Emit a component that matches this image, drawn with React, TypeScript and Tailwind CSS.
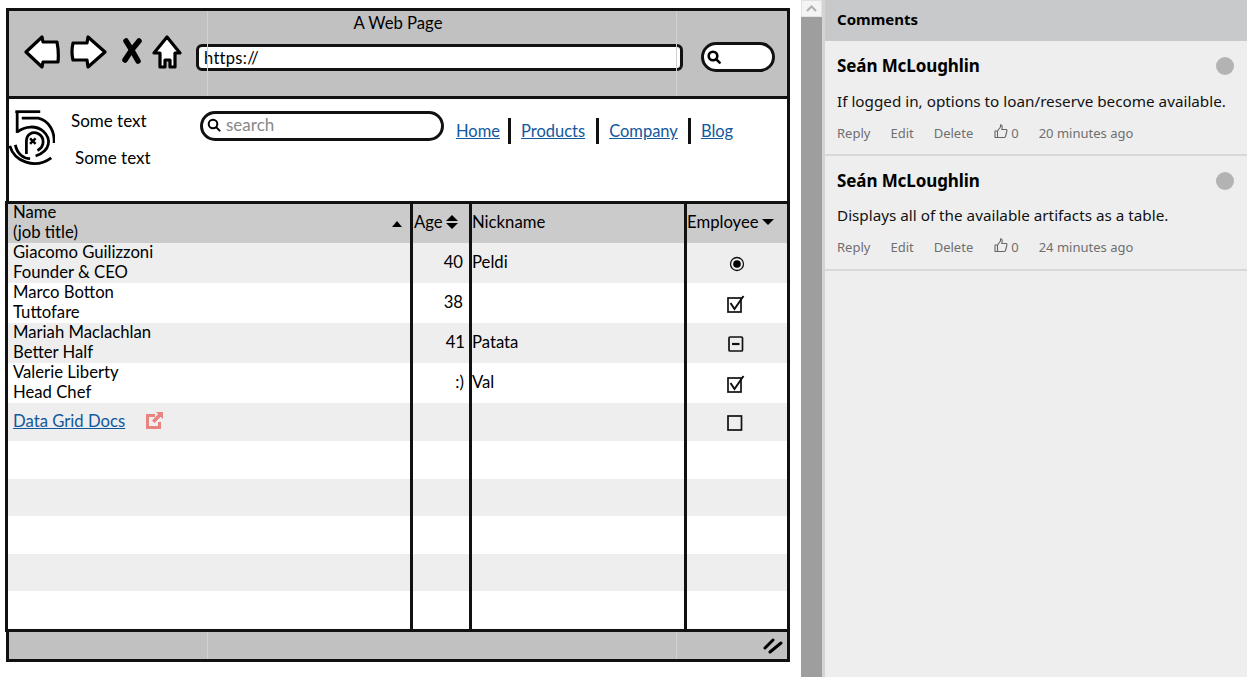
import React from "react";

const sk = "font-['Lato','Liberation_Sans',sans-serif]";

function Back() {
  return (
    <svg width="36" height="34" viewBox="0 0 36 34" fill="#fff" stroke="#000" strokeWidth="3.2" strokeLinejoin="round" strokeLinecap="round">
      <path d="M2 17 L18 2 L19 7 L33 7 Q35 17 34 27 L19 27 L18 32 Z" />
    </svg>
  );
}
function Forward() {
  return (
    <svg width="37" height="34" viewBox="0 0 37 34" fill="#fff" stroke="#000" strokeWidth="3.2" strokeLinejoin="round" strokeLinecap="round">
      <path d="M35 17 L18 2 L17 8 L3 8 Q1 17 3 25 L17 25 L18 32 Z" />
    </svg>
  );
}
function Cross() {
  return (
    <svg width="20" height="26" viewBox="0 0 20 26" fill="none" stroke="#000" strokeWidth="5.5" strokeLinecap="round">
      <path d="M4 3 Q10 12 16 23" />
      <path d="M17 3 Q9 12 3 22" />
    </svg>
  );
}
function Home() {
  return (
    <svg width="30" height="35" viewBox="0 0 30 35" fill="#fff" stroke="#000" strokeWidth="3.2" strokeLinejoin="round" strokeLinecap="round">
      <path d="M15 2 L28 18 L23 18 L23 32 L18 32 L18 25 L13 25 L13 32 L8 32 L8 18 L2 18 Z" />
    </svg>
  );
}
function Logo() {
  return (
    <svg width="48" height="59" viewBox="0 0 52 64" fill="none" stroke="#000" strokeWidth="3" className="shrink-0">
      <path d="M9 4 L36 4" />
      <path d="M11 4 L11 27" />
      <path d="M16 11 L34 11 C46 14 52 26 51 38" />
      <path d="M11 26 C20 19 32 19 39 25 C48 33 48 46 31 52" />
      <path d="M3 41 C8 58 30 67 48 54" />
      <path d="M9 40 C11 50 18 55 25 55" />
      <path d="M21 50 L21 36 C21 28 28 25 34 28 C41 32 41 42 33 46" />
      <path d="M25 33 L31 39 M31 33 L25 39" strokeWidth="2.6" />
    </svg>
  );
}
function Mag({ size = 14, w = 2 }: { size?: number; w?: number }) {
  return (
    <svg width={size} height={size} viewBox="0 0 14 14" fill="none" stroke="#000" strokeWidth={w} strokeLinecap="round" className="shrink-0">
      <circle cx="6" cy="6" r="4.3" />
      <path d="M9.4 9.4 L12.6 12.6" />
    </svg>
  );
}
function Check() {
  return (
    <svg width="20" height="20" viewBox="0 0 20 20" fill="none" stroke="#111" className="mx-auto">
      <rect x="2" y="4" width="13" height="14" strokeWidth="1.7" />
      <path d="M4.5 9 L8.5 15 L17.5 2" strokeWidth="2" />
    </svg>
  );
}
function Minus() {
  return (
    <svg width="20" height="20" viewBox="0 0 20 20" fill="none" stroke="#111" className="mx-auto">
      <rect x="3" y="3" width="13.5" height="14" rx="1" strokeWidth="1.7" />
      <path d="M6 10 L13.5 10" strokeWidth="2.2" />
    </svg>
  );
}
function Empty() {
  return (
    <svg width="20" height="20" viewBox="0 0 20 20" fill="none" stroke="#111" className="mx-auto">
      <rect x="3" y="3" width="13.5" height="14" strokeWidth="1.7" />
    </svg>
  );
}
function Radio() {
  return (
    <svg width="20" height="20" viewBox="0 0 20 20" fill="none" className="mx-auto">
      <circle cx="11" cy="10" r="6.5" stroke="#111" strokeWidth="1.3" />
      <circle cx="11" cy="10" r="3.8" fill="#000" />
    </svg>
  );
}
function Thumb() {
  return (
    <svg width="14" height="15" viewBox="0 0 14 15" fill="none" stroke="#666" strokeWidth="1.1" strokeLinejoin="round" className="shrink-0">
      <path d="M1 7 H3.5 V13.5 H1 Z" />
      <path d="M3.5 7 L6.5 3 V0.8 Q8.3 1 8.2 3 L7.8 5.5 H12.5 Q13.3 6 12.8 7.5 L11.5 12.5 Q11 13.5 10 13.5 H3.5" />
    </svg>
  );
}
function External() {
  return (
    <svg width="17" height="17" viewBox="0 0 17 17" className="shrink-0">
      <path d="M0 2 H9 V5 H3 V14 H12 V10 H15 V17 H0 Z" fill="#e8837f" />
      <path d="M10 0 H17 V7 L14.7 4.8 L8.5 11 L6 8.5 L12.2 2.3 Z" fill="#e8837f" />
    </svg>
  );
}

const rows: { name: string; title: string; age: string; nick: string; icon: React.ReactNode; ageExtra: string; bg: string }[] = [
  { name: "Giacomo Guilizzoni", title: "Founder & CEO", age: "40", nick: "Peldi", icon: <Radio />, ageExtra: "pr-[6px]", bg: "bg-[#eeeeee]" },
  { name: "Marco Botton", title: "Tuttofare", age: "38", nick: "", icon: <Check />, ageExtra: "pr-[6px]", bg: "bg-white" },
  { name: "Mariah Maclachlan", title: "Better Half", age: "41", nick: "Patata", icon: <Minus />, ageExtra: "pr-[4px]", bg: "bg-[#eeeeee]" },
  { name: "Valerie Liberty", title: "Head Chef", age: ":)", nick: "Val", icon: <Check />, ageExtra: "pr-[5px]", bg: "bg-white" },
];

const cols = "grid grid-cols-[402px_59px_215px_1fr]";
const vline = "border-l-[3px] border-[#111]";

function Comment({ time, text, shift }: { time: string; text: string; shift: string }) {
  return (
    <div className="h-[115px] border-b-2 border-[#d8d8d8] pl-3 pr-[13px] pt-[12px] box-border">
      <div className="flex items-center justify-between h-[25px]">
        <span className="text-[17px] font-bold text-black tracking-[-0.1px]">Seán McLoughlin</span>
        <span className="w-[18px] h-[18px] rounded-full bg-[#b3b3b3]" />
      </div>
      <p className={`text-[15.25px] leading-5 text-[#111] whitespace-nowrap ${shift}`}>{text}</p>
      <div className="flex items-center text-[13px] leading-5 text-[#6f6f6f] mt-[12px]">
        <span>Reply</span>
        <span className="ml-[20px]">Edit</span>
        <span className="ml-[20px]">Delete</span>
        <span className="ml-[21px] -mt-1"><Thumb /></span>
        <span className="ml-[3px]">0</span>
        <span className="ml-[20px]">{time}</span>
      </div>
    </div>
  );
}

export default function App() {
  return (
    <div className="flex h-[677px] w-[1247px] overflow-hidden bg-white">
      <div className={`w-[801px] shrink-0 pt-[8px] pl-[6px] pr-[11px] text-black ${sk}`}>
        <div className="relative h-[91px] border-[3px] border-[#111] bg-[#c1c1c1]">
          <span className="absolute left-[198px] top-0 bottom-0 w-px bg-[#d2d2d2]" />
          <span className="absolute left-[667px] top-0 bottom-0 w-px bg-[#d2d2d2]" />
          <div className="text-center text-[16.7px] leading-5 pt-[2px]">A Web Page</div>
          <div className="flex items-start pl-[15px] mt-[2px]">
            <Back />
            <span className="ml-[10px]"><Forward /></span>
            <span className="ml-[15px] mt-[3px]"><Cross /></span>
            <span className="ml-[10px]"><Home /></span>
            <div className="ml-[14px] w-[487px] h-[27px] mt-[9px] border-[3px] border-[#111] bg-white rounded-[6px] text-[16.5px] tracking-[0.3px] leading-5 px-[5px] flex items-center">https://</div>
            <div className="ml-[18px] w-[74px] h-[30px] mt-[7px] border-[3px] border-[#111] bg-white rounded-[15px] flex items-center pl-[3px]">
              <Mag size={14} w={2.6} />
            </div>
          </div>
        </div>
        <div className="h-[102px] border-x-[3px] border-[#111] bg-white flex items-start">
          <div className="pt-[9px] -ml-[2px]"><Logo /></div>
          <div className="ml-[16px] pt-[12px] text-[17px] leading-5 w-[129px] shrink-0">
            <div>Some text</div>
            <div className="mt-[17px] ml-[4px]">Some text</div>
          </div>
          <div className="mt-[12px] w-[244px] h-[30px] shrink-0 border-[3px] border-[#111] rounded-[15px] flex items-center pl-[4px] pb-[3px] text-[17px] text-[#888]">
            <Mag size={14} w={2} />
            <span className="ml-[5px]">search</span>
          </div>
          <div className="ml-[12px] mt-[19px] flex items-center text-[16.5px] text-[#11589d] underline">
            <span>Home</span>
            <span className="ml-[8px] mr-[10px] w-[3px] h-[26px] bg-[#111]" />
            <span>Products</span>
            <span className="ml-[11px] mr-[10px] w-[3px] h-[26px] bg-[#111]" />
            <span>Company</span>
            <span className="ml-[10px] mr-[10px] w-[3px] h-[26px] bg-[#111]" />
            <span>Blog</span>
          </div>
        </div>
        <div className="h-[431px] -ml-px border-[3px] border-[#111] text-[16.7px] leading-5 overflow-hidden box-border">
          <div className={`${cols} h-[39px] bg-[#cbcbcb]`}>
            <div className="relative pl-[5px]">
              <div className="-mt-[2px]">Name</div>
              <div>(job title)</div>
              <span className="absolute right-[8px] top-[17px] w-0 h-0 border-x-[5px] border-x-transparent border-b-[6px] border-b-black" />
            </div>
            <div className={`${vline} flex items-center pl-[1px] pb-[3px]`}>
              Age
              <span className="ml-[3px] flex flex-col gap-[2px]">
                <span className="w-0 h-0 border-x-[6px] border-x-transparent border-b-[6px] border-b-black" />
                <span className="w-0 h-0 border-x-[6px] border-x-transparent border-t-[6px] border-t-black" />
              </span>
            </div>
            <div className={`${vline} flex items-center pb-[3px]`}>Nickname</div>
            <div className={`${vline} flex items-center pb-[3px] whitespace-nowrap`}>
              Employee
              <span className="ml-[3px] w-0 h-0 border-x-[6px] border-x-transparent border-t-[6px] border-t-black" />
            </div>
          </div>
          {rows.map((r) => (
            <div key={r.name} className={`${cols} h-[40px] ${r.bg}`}>
              <div className="pl-[5px]">
                <div className="-mt-px">{r.name}</div>
                <div>{r.title}</div>
              </div>
              <div className={`${vline} text-right pt-[9px] ${r.ageExtra}`}>{r.age}</div>
              <div className={`${vline} pt-[9px]`}>{r.nick}</div>
              <div className={`${vline} flex items-center pt-[2px] pr-[3px]`}>{r.icon}</div>
            </div>
          ))}
          <div className={`${cols} h-[38px] bg-[#eeeeee]`}>
            <div className="pl-[5px] flex items-center pb-[2px]">
              <span className="text-[#11589d] underline">Data Grid Docs</span>
              <span className="ml-[21px] -mt-[1px]"><External /></span>
            </div>
            <div className={vline} />
            <div className={vline} />
            <div className={`${vline} flex items-center pt-[2px] pr-[5px]`}><Empty /></div>
          </div>
          {["bg-white", "bg-[#eeeeee]", "bg-white", "bg-[#eeeeee]", "bg-white"].map((bg, i) => (
            <div key={i} className={`${cols} h-[37.5px] ${bg}`}>
              <div />
              <div className={vline} />
              <div className={vline} />
              <div className={vline} />
            </div>
          ))}
        </div>
        <div className="relative h-[30px] border-x-[3px] border-b-[3px] border-[#111] bg-[#c1c1c1] flex items-center justify-end pr-[4px]">
          <span className="absolute left-[198px] top-0 bottom-0 w-px bg-[#d2d2d2]" />
          <span className="absolute left-[667px] top-0 bottom-0 w-px bg-[#d2d2d2]" />
          <svg width="20" height="16" viewBox="0 0 20 16" fill="none" stroke="#000" strokeWidth="3" strokeLinecap="round">
            <path d="M2 10 L10 2" />
            <path d="M7 14 L18 5" />
          </svg>
        </div>
      </div>
      <div className="w-[21px] shrink-0 bg-[#9e9e9e]">
        <div className="h-[17px] bg-[#f4f4f4] border border-[#e2e2e2] flex items-center justify-center">
          <svg width="11" height="7" viewBox="0 0 11 7" fill="none" stroke="#b0b0b0" strokeWidth="2"><path d="M1 6 L5.5 1.5 L10 6" /></svg>
        </div>
      </div>
      <div className="flex-1 border-l-[3px] border-[#d4d4d4] bg-[#eeeeee] font-['Noto_Sans','Open_Sans',sans-serif]">
        <div className="h-[41px] bg-[#c8c9cb] pl-3 flex items-center text-[15px] font-bold text-black pb-[2px]">Comments</div>
        <Comment time="20 minutes ago" text="If logged in, options to loan/reserve become available." shift="mt-[13px]" />
        <Comment time="24 minutes ago" text="Displays all of the available artifacts as a table." shift="mt-[12px] mb-[1px]" />
      </div>
    </div>
  );
}
